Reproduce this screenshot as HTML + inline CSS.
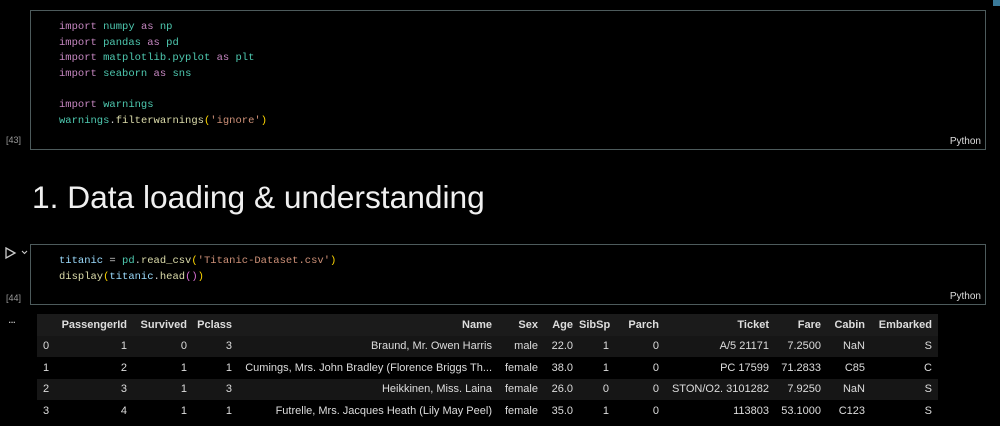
<!DOCTYPE html>
<html><head><meta charset="utf-8"><style>
body{margin:0;width:1000px;height:426px;background:#000;position:relative;overflow:hidden;font-family:"Liberation Sans",sans-serif;color:#ccc}
.cell{position:absolute;left:30px;width:956px;border:1px solid #4d5b5c;box-sizing:border-box}
.code{position:absolute;left:59px;font-family:"Liberation Mono",monospace;font-size:10.5px;line-height:15.6px;white-space:pre;color:#ccc}
.k{color:#c586c0}.m{color:#4ec9b0}.s{color:#ce9178}.p{color:#ffd700}.v{color:#9cdcfe}.f{color:#dcdcaa}.pp{color:#da70d6}
.num{position:absolute;left:6px;font-size:9px;color:#999}
.py{position:absolute;right:4px;bottom:2px;font-size:10px;color:#ddd}
table{position:absolute;left:37px;top:314px;width:901px;border-collapse:collapse;font-size:11px;color:#ddd;table-layout:fixed}
td,th{padding:0 6px 0 0;text-align:right;height:21.5px;white-space:nowrap;overflow:hidden;box-sizing:border-box}
th{font-weight:bold;background:#1b1b1b}
tr:nth-child(even) td{background:#161616}
td:first-child{text-align:left;padding-left:6px}
</style></head><body>
<div style="position:absolute;left:993px;top:0;width:7px;height:6px;background:#3a7a9a"></div>
<div class="cell" style="top:10px;height:140px"><div class="py">Python</div></div>
<div class="num" style="top:135px">[43]</div>
<div class="code" style="top:20px"><span class="k">import</span> <span class="m">numpy</span> <span class="k">as</span> <span class="m">np</span>
<span class="k">import</span> <span class="m">pandas</span> <span class="k">as</span> <span class="m">pd</span>
<span class="k">import</span> <span class="m">matplotlib.pyplot</span> <span class="k">as</span> <span class="m">plt</span>
<span class="k">import</span> <span class="m">seaborn</span> <span class="k">as</span> <span class="m">sns</span>

<span class="k">import</span> <span class="m">warnings</span>
<span class="m">warnings</span>.<span class="f">filterwarnings</span><span class="p">(</span><span class="s">'ignore'</span><span class="p">)</span></div>
<div style="position:absolute;left:32px;top:179px;font-size:31.7px;color:#f0f0f0">1. Data loading &amp; understanding</div>
<svg style="position:absolute;left:4px;top:246px" width="24" height="14"><path d="M2 2 L11 7 L2 12 Z" fill="none" stroke="#ccc" stroke-width="1.3"/><path d="M18 5 L20.5 7.5 L23 5" fill="none" stroke="#ccc" stroke-width="1.1"/></svg>
<div class="cell" style="top:244px;height:61px"><div class="py">Python</div></div>
<div class="num" style="top:293px">[44]</div>
<div class="code" style="top:254px"><span class="v">titanic</span> = <span class="m">pd</span>.<span class="f">read_csv</span><span class="p">(</span><span class="s">'Titanic-Dataset.csv'</span><span class="p">)</span>
<span class="f">display</span><span class="p">(</span><span class="v">titanic</span>.<span class="f">head</span><span class="pp">()</span><span class="p">)</span></div>
<div style="position:absolute;left:8px;top:312px;font-size:12px;color:#ccc;letter-spacing:-1px">...</div>
<table>
<colgroup><col style="width:23px"><col style="width:73px"><col style="width:60px"><col style="width:45px"><col style="width:260px"><col style="width:46px"><col style="width:35px"><col style="width:36px"><col style="width:50px"><col style="width:110px"><col style="width:52px"><col style="width:44px"><col style="width:67px"></colgroup>
<tr><th></th><th>PassengerId</th><th>Survived</th><th>Pclass</th><th>Name</th><th>Sex</th><th>Age</th><th>SibSp</th><th>Parch</th><th>Ticket</th><th>Fare</th><th>Cabin</th><th>Embarked</th></tr>
<tr><td>0</td><td>1</td><td>0</td><td>3</td><td>Braund, Mr. Owen Harris</td><td>male</td><td>22.0</td><td>1</td><td>0</td><td>A/5 21171</td><td>7.2500</td><td>NaN</td><td>S</td></tr>
<tr><td>1</td><td>2</td><td>1</td><td>1</td><td>Cumings, Mrs. John Bradley (Florence Briggs Th...</td><td>female</td><td>38.0</td><td>1</td><td>0</td><td>PC 17599</td><td>71.2833</td><td>C85</td><td>C</td></tr>
<tr><td>2</td><td>3</td><td>1</td><td>3</td><td>Heikkinen, Miss. Laina</td><td>female</td><td>26.0</td><td>0</td><td>0</td><td>STON/O2. 3101282</td><td>7.9250</td><td>NaN</td><td>S</td></tr>
<tr><td>3</td><td>4</td><td>1</td><td>1</td><td>Futrelle, Mrs. Jacques Heath (Lily May Peel)</td><td>female</td><td>35.0</td><td>1</td><td>0</td><td>113803</td><td>53.1000</td><td>C123</td><td>S</td></tr>
</table>
</body></html>
